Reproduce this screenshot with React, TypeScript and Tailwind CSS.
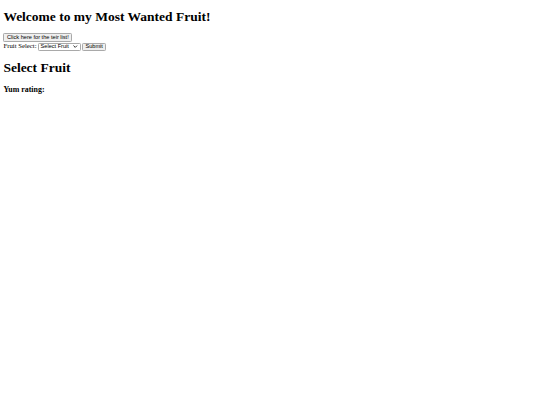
export default function App() {
  return (
    <div className="m-[3.375px] font-['Liberation_Serif',serif] text-[6.75px] text-black">
      <h1 className="text-[13.5px] font-bold mt-[9.05px] mb-[8.45px] leading-[15.5px]">Welcome to my Most Wanted Fruit!</h1>
      <div className="h-[9.7px]">
        <button className="flex items-center justify-center h-[8.7px] w-[69px] font-['Liberation_Sans',sans-serif] text-[5.625px] leading-none bg-[#efefef] border border-[#a9a9a9] rounded-[1.3px]">
          Click here for the teir list!
        </button>
      </div>
      <div className="flex items-start h-[8.3px]">
        <span className="leading-none mr-[1.4px]">Fruit Select:</span>
        <span className="flex items-center justify-between w-[43px] h-[8.3px] bg-white border border-[#a9a9a9] rounded-[1.3px] pl-[1.6px] pr-[2px] font-['Liberation_Sans',sans-serif] text-[5.625px] leading-none">
          <span>Select Fruit</span>
          <svg width="4.5" height="3" viewBox="0 0 10 6" fill="none" stroke="#000" strokeWidth="1.8">
            <path d="M1 1 L5 5 L9 1" />
          </svg>
        </span>
        <button className="ml-[1.4px] flex items-center justify-center h-[8.3px] w-[23.7px] font-['Liberation_Sans',sans-serif] text-[5.625px] leading-none bg-[#efefef] border border-[#a9a9a9] rounded-[1.3px]">
          Submit
        </button>
      </div>
      <h2 className="text-[13.5px] font-bold mt-[8.7px] mb-0 leading-[15.5px]">Select Fruit</h2>
      <h3 className="text-[7.9px] font-bold mt-[9.6px] leading-[9px]">Yum rating:</h3>
    </div>
  );
}
